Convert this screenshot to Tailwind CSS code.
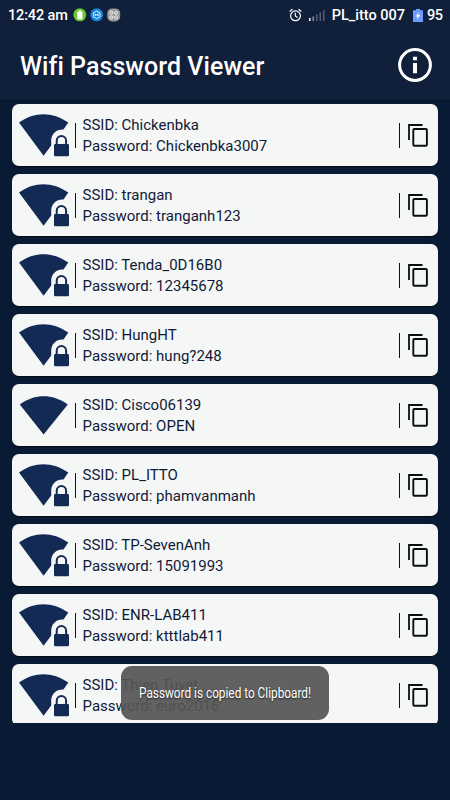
<!DOCTYPE html>
<html lang="en">
<head>
    <meta charset="UTF-8">
    <meta name="viewport" content="width=device-width, initial-scale=1.0">
    <title>Wifi Password Viewer</title>
    <script src="https://cdn.jsdelivr.net/npm/@tailwindcss/browser@4"></script>
</head>
<body class="relative h-[800px] w-[450px] overflow-hidden bg-[#081a34] font-['Roboto',sans-serif]">
    <!-- Icons -->
    <svg class="hidden">
        <symbol id="wifi-lock" viewBox="0 0 54 46">
            <path fill="#132a55" d="M1 9.600C8.500 4 17 1.200 25.500 1.200S42.500 4 50.300 9.600L45.500 16.500C38.500 16 33.200 21 33.200 27.500V32.500L25.600 42.800z"/>
            <path fill="none" stroke="#132a55" stroke-width="2" d="M38.700 32V27.700a4.700 4.700 0 0 1 9.400 0V32"/>
            <rect x="36" y="31" width="15" height="12.300" rx="1.300" fill="#132a55"/>
        </symbol>
        <symbol id="wifi-open" viewBox="0 0 54 46">
            <path fill="#132a55" d="M1.800 11.500C9.500 5.800 17.500 3.200 25.600 3.200S42 5.800 49.800 11.500L25.600 41.500z"/>
        </symbol>
        <symbol id="copy" viewBox="0 0 22 24">
            <path fill="none" stroke="#0c0f12" stroke-width="1.800" d="M2 17V2H15.500"/>
            <rect x="6.300" y="6" width="13.600" height="16.800" rx="1" fill="none" stroke="#0c0f12" stroke-width="1.900"/>
        </symbol>
    </svg>

    <header class="h-[100px] bg-[#101f3a] text-white shadow-[0_1px_2px_rgba(0,0,0,0.35)]">
        <!-- Status bar -->
        <div class="flex h-[30px] items-center justify-between pl-[8px] pr-[8px] text-[14.500px] font-medium leading-none">
            <div class="flex items-center">
                <span class="w-[65px] whitespace-nowrap pt-[2px] tracking-[-0.15px]">12:42 am</span>
                <svg class="h-[14px] w-[48px]" viewBox="0 0 48 14">
                    <circle cx="6.800" cy="6.800" r="6.500" fill="#6cc635"/>
                    <path fill="#fff" d="M5.600 2.500h2.600v1.200h1.300v7.600h-5.200V3.700h1.300z"/>
                    <circle cx="23.700" cy="6.800" r="6.500" fill="#1583d8"/>
                    <path fill="none" stroke="#fff" stroke-width=".9" d="M23.700 3l3.300 1.900v3.900l-3.300 1.900-3.300-1.900V4.900zM22.300 5.700v2.300M25.100 5.700v2.300M22.300 6.900h2.800"/>
                    <rect x="34.200" y=".4" width="13" height="13" rx="5" fill="#9b9b9b"/>
                    <g fill="none" stroke="#fff" stroke-width=".9">
                        <rect x="37.100" y="3.500" width="2.600" height="2.600" rx=".8"/>
                        <rect x="41.700" y="3.500" width="2.600" height="2.600" rx=".8"/>
                        <rect x="37.100" y="8" width="2.600" height="2.600" rx=".8"/>
                        <rect x="41.700" y="8" width="2.600" height="2.600" rx=".8"/>
                    </g>
                </svg>
            </div>
            <div class="flex items-center">
                <svg class="mr-[7px] h-[14px] w-[13px]" viewBox="0 0 13 14">
                    <circle cx="6.500" cy="7.800" r="4.900" fill="none" stroke="#fff" stroke-width="1.200"/>
                    <path fill="none" stroke="#fff" stroke-width="1.200" d="M.7 3.500L3.500 1.200M12.300 3.500L9.500 1.200M6.300 4.800V8L8.600 9.600"/>
                </svg>
                <svg class="mr-[7px] h-[13px] w-[16px]" viewBox="0 0 16 13">
                    <path fill="#fff" d="M0 9h1.500v3H0z"/>
                    <path fill="#8890a0" d="M3.500 7.500H5V12H3.500z"/>
                    <path fill="#556077" d="M7 5.500h1.500V12H7zM10.500 3.500H12V12h-1.500zM14 1.200h1.500V12H14z"/>
                </svg>
                <span class="mr-[8px] whitespace-nowrap pt-[2px]">PL_itto 007</span>
                <svg class="mr-[4px] h-[13px] w-[10px]" viewBox="0 0 10 13">
                    <path fill="#6f9dff" d="M3 0h4v1.200h3V13H0V1.200h3z"/>
                    <path fill="#fff" d="M5.600 3.300L2.700 7.400h2l-.5 3L7.300 6H5.400z"/>
                </svg>
                <span class="w-[15px] pt-[2px] tracking-[-0.5px]">95</span>
            </div>
        </div>

        <!-- App bar -->
        <div class="flex h-[70px] items-center justify-between pl-5 pr-[18px]">
            <h1 class="pt-[3px] text-[25px] font-medium leading-[34px] tracking-[0.06px]">Wifi Password Viewer</h1>
            <svg class="h-[34px] w-[34px]" viewBox="0 0 34 34">
                <circle cx="17" cy="17" r="15.400" fill="none" stroke="#fff" stroke-width="3"/>
                <path fill="#fff" d="M15 8.800h4v3.400h-4zM15 15h4v10.300h-4z"/>
            </svg>
        </div>
    </header>

    <main id="list" class="flex h-[623px] flex-col gap-2 overflow-hidden px-3 pt-1"></main>

    <!-- Toast -->
    <div class="absolute left-[121px] top-[666px] flex h-[54px] w-[208px] items-center justify-center rounded-[11px] bg-[#555555]/93">
        <span class="scale-x-[0.843] whitespace-nowrap text-[14px] text-white [text-shadow:0_1px_2px_rgba(0,0,0,0.7)]">Password is copied to Clipboard!</span>
    </div>

    <script>
        const networks = [
            ['Chickenbka', 'Chickenbka3007'],
            ['trangan', 'tranganh123'],
            ['Tenda_0D16B0', '12345678'],
            ['HungHT', 'hung?248'],
            ['Cisco06139', 'OPEN'],
            ['PL_ITTO', 'phamvanmanh'],
            ['TP-SevenAnh', '15091993'],
            ['ENR-LAB411', 'ktttlab411'],
            ['Thien Tuyet', 'euro2016']
        ];

        document.getElementById('list').innerHTML = networks.map(([ssid, password]) => `
            <div class="flex h-[62px] shrink-0 items-center rounded-[7px] bg-[#f5f7f6] pl-[6px] pr-[9px] shadow-[0_1px_1px_rgba(0,0,0,0.6)]">
                <svg class="mt-[2px] h-[46px] w-[54px]"><use href="#${password === 'OPEN' ? 'wifi-open' : 'wifi-lock'}"/></svg>
                <div class="ml-[3px] h-[25px] w-px bg-[#101318]"></div>
                <div class="ml-[6.500px] flex-1 pt-[1px] text-[15px] leading-[20.500px] text-[#101a38]">
                    <p>SSID: ${ssid}</p>
                    <p>Password: ${password}</p>
                </div>
                <div class="mr-[7px] h-[25px] w-px bg-[#101318]"></div>
                <svg class="h-[24px] w-[22px]"><use href="#copy"/></svg>
            </div>
        `).join('');
    </script>
</body>
</html>
